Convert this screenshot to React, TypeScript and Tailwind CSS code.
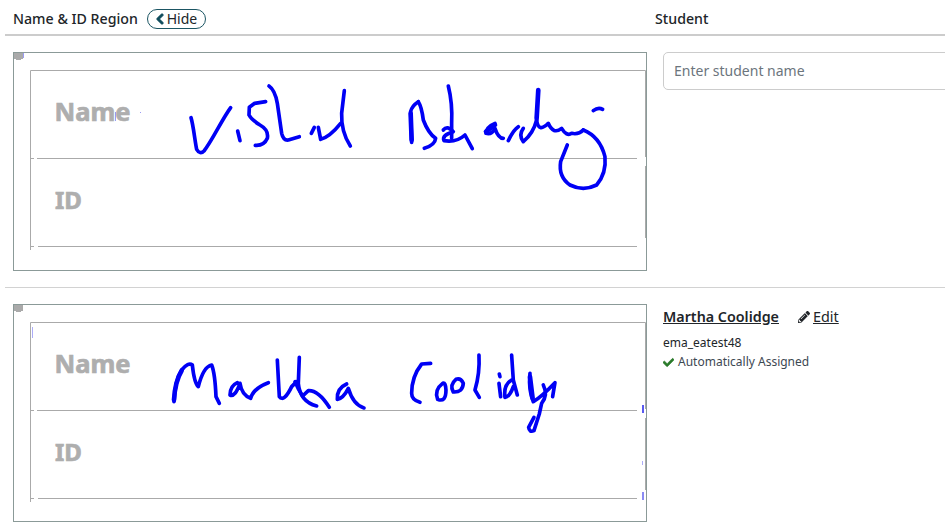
import { ReactNode } from 'react';
import { FaCheck, FaChevronLeft, FaPencilAlt } from 'react-icons/fa';

const vishalStrokes = [
  'M63,143 C70,165 75,215 80,238 Q90,255 102,243 C125,215 155,150 182,113',
  'M203,183 L210,212',
  'M287,95 L254,100 L238,112 L237,135 Q245,150 270,165 Q297,180 292,205 Q282,228 256,226',
  'M297,48 Q315,60 322,100 L335,190 Q340,212 355,210 L388,200',
  'M424,190 L433,172',
  'M445,172 L452,208 Q480,200 512,160',
  'M523,62 L515,130 Q513,185 541,228',
  'M745,95 Q725,108 722,125 L725,217',
  'M745,95 Q755,110 760,150 Q775,190 797,205 Q795,225 763,235',
  'M835,48 Q848,100 845,160 L845,205',
  'M820,180 Q832,165 850,185 Q815,195 822,212 Q860,218 885,195 L907,236',
  'M975,160 Q950,170 948,190 Q965,195 975,175 Q985,205 1000,205',
  'M1015,212 Q1030,180 1045,170',
  'M1060,175 Q1045,195 1060,215 Q1090,190 1100,150',
  'M1100,150 Q1105,190 1135,160 Q1150,195 1175,175 Q1190,200 1205,190 Q1225,195 1240,180',
  'M1270,122 Q1285,110 1298,118',
  'M1240,180 Q1290,200 1305,260 Q1310,310 1280,345 Q1240,365 1200,345 Q1165,320 1172,275 L1192,225',
];

const vishalHeavy = ['M1105,60 L1100,145', 'M722,130 L725,210', 'M948,185 L975,165'];

const marthaStrokes = [
  'M42,185 Q45,120 65,90 Q85,65 97,75 Q103,130 115,140 Q130,80 155,75 Q165,100 168,170 L178,190',
  'M232,128 Q210,138 210,165 Q225,172 240,130 Q245,165 272,175 Q280,145 325,128',
  'M352,60 L358,170 Q372,188 395,140 L410,125',
  'M418,52 L415,130 Q420,185 470,198',
  'M405,125 Q415,150 428,168 L445,152 Q475,150 508,202',
  'M560,132 Q530,145 532,178 Q550,175 565,145 Q580,195 612,204',
  'M812,70 L785,72 Q755,110 755,160 Q755,180 780,187',
  'M848,130 Q822,150 833,178 Q858,188 858,150 Q857,126 848,130',
  'M888,118 Q868,135 880,156 Q908,158 910,130 Q902,113 888,118',
  'M957,45 Q960,100 945,150 L958,172',
  'M1018,102 L1020,110 M1017,130 L1022,170',
  'M1055,45 L1060,120 L1072,165 M1055,120 Q1030,135 1035,172 Q1050,170 1060,140',
  'M1110,100 Q1105,150 1120,185 Q1145,170 1185,128 L1178,170 M1150,135 Q1165,165 1145,190 L1138,222 L1122,272 Q1108,278 1106,262 L1122,232',
];

const marthaHeavy = ['M42,180 Q45,125 65,92', 'M1110,110 L1118,175'];

function ScanCard({ viewBox, top, height, strokes, heavy, inkOrigin, specks }: {
  viewBox: string;
  top: number;
  height: number;
  strokes: string[];
  heavy: string[];
  inkOrigin: string;
  specks: ReactNode;
}) {
  return (
    <div className="w-[634px] shrink-0 self-start border border-[#8b9a98] bg-white">
      <svg className="block w-[632px]" style={{ height }} viewBox={viewBox}>
        <path d={`M14,${top + 1} h9 v6 h-2 v1 h-5 v-1 h-2 z`} fill="#aaaaaa" />
        <g fill="none" stroke="#aaaaaa" strokeWidth="1">
          <path d={`M30.5,${top + 18.5} H645.5 V${top + 105}`} />
          <path d={`M30.5,${top + 18.5} V${top + 198}`} />
          <path d={`M30.5,${top + 106.5} H34 M37,${top + 106.5} H637 M30.5,${top + 194.5} H34 M38,${top + 194.5} H637`} />
          <path d={`M645.5,${top + 114} V${top + 186}`} />
        </g>
        <text x="54.5" y={top + 69} fill="#aeaeae" stroke="#aeaeae" strokeWidth="0.7" fontSize="25.5" fontWeight="700" fontFamily="'Noto Sans', sans-serif">Name</text>
        <text x="55" y={top + 157} fill="#aeaeae" stroke="#aeaeae" strokeWidth="0.7" fontSize="24" fontWeight="700" fontFamily="'Noto Sans', sans-serif">ID</text>
        <g transform={inkOrigin} fill="none" stroke="#0000f5" strokeWidth="11" strokeLinecap="round" strokeLinejoin="round">
          {strokes.map((d) => <path key={d} d={d} />)}
          {heavy.map((d) => <path key={d} d={d} strokeWidth="14" />)}
        </g>
        {specks}
      </svg>
    </div>
  );
}

export default function App() {
  return (
    <div className="h-[526px] w-[945px] overflow-hidden bg-white font-['Noto_Sans',sans-serif] text-[#212529]">
      <div className="ml-[5px] flex h-[36px] items-center border-b-2 border-[#cccccc] pl-[8px] pt-[4px]">
        <div className="flex w-[642px] items-center gap-[9px]">
          <span className="text-[14.2px] font-medium">Name &amp; ID Region</span>
          <button className="flex h-[20px] w-[59px] items-center justify-center gap-[3px] rounded-full border border-[#1b5563] text-[14px] leading-none">
            <FaChevronLeft className="h-[12px] w-[8px] text-[#0f4c5c]" stroke="currentColor" strokeWidth="45" />
            Hide
          </button>
        </div>
        <span className="text-[14.2px] font-medium">Student</span>
      </div>

      <div className="ml-[5px] flex h-[252px] gap-[16px] border-b border-[#d2d2d2] pl-[8px] pt-[16px]">
        <ScanCard
          viewBox="14 53 632 217"
          top={52}
          height={217}
          strokes={vishalStrokes}
          heavy={vishalHeavy}
          inkOrigin="translate(170 70) scale(0.3333)"
          specks={
            <g fill="#5a5af0" opacity="0.6">
              <rect x="23" y="53" width="1" height="5" />
              <rect x="115" y="112" width="1" height="9" />
              <rect x="140" y="112" width="1" height="1" />
            </g>
          }
        />
        <input
          className="h-[38px] w-[300px] shrink-0 rounded-[5px] border border-[#cccccc] px-[10px] pb-[2px] text-[14px] placeholder:text-[#6c757d]"
          placeholder="Enter student name"
        />
      </div>

      <div className="ml-[5px] flex gap-[16px] pl-[8px] pt-[16px]">
        <ScanCard
          viewBox="14 305 632 216"
          top={304}
          height={216}
          strokes={marthaStrokes}
          heavy={marthaHeavy}
          inkOrigin="translate(160 340) scale(0.3333)"
          specks={
            <g fill="#5a5af0">
              <rect x="32" y="327" width="1" height="11" opacity="0.5" />
              <rect x="642" y="405" width="2" height="8" />
              <rect x="642" y="461" width="1" height="4" opacity="0.5" />
              <rect x="642" y="492" width="2" height="8" opacity="0.7" />
            </g>
          }
        />
        <div className="pt-[2px]">
          <div className="flex items-center">
            <span className="text-[14.3px] font-semibold underline">Martha Coolidge</span>
            <span className="ml-[19px] flex items-center text-[14.4px] underline">
              <FaPencilAlt className="mr-[3px] h-[12px] w-[12px]" />
              Edit
            </span>
          </div>
          <div className="mt-[6px] text-[12px] leading-[18px]">ema_eatest48</div>
          <div className="mt-[1.5px] flex items-center gap-[4px] text-[12px] leading-[18px] text-[#3d4852]">
            <FaCheck className="h-[11px] w-[11px] text-[#2a7a2a]" stroke="currentColor" strokeWidth="30" />
            Automatically Assigned
          </div>
        </div>
      </div>
    </div>
  );
}
